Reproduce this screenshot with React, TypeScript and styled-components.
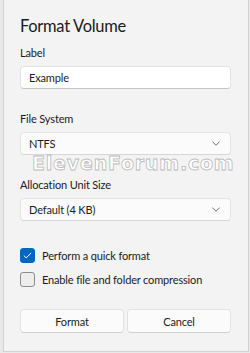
import React from 'react';
import styled, { createGlobalStyle } from 'styled-components';

const GlobalStyle = createGlobalStyle`
  html, body {
    margin: 0;
    padding: 0;
    background: #e9e9e9;
  }
  body {
    font-family: Lato, "Open Sans", sans-serif;
    color: #1b1b1b;
  }
`;

const Page = styled.div`
  width: 250px;
  height: 353px;
  padding-left: 3px;
  box-sizing: border-box;
`;

const Dialog = styled.div`
  position: relative;
  width: 246px;
  height: 352px;
  box-sizing: border-box;
  background: #f3f3f3;
  border: 1px solid #d2d2d2;
  border-top: none;
  padding: 14px 17px 0 16px;
  display: flex;
  flex-direction: column;
  font-size: 11px;
  letter-spacing: -0.15px;
`;

const Title = styled.h1`
  margin: 0 0 7px;
  font-size: 16.5px;
  line-height: 24px;
  font-weight: 400;
  letter-spacing: -0.3px;
`;

const FieldLabel = styled.div`
  line-height: 16px;
  margin-bottom: 5px;
`;

const Box = styled.div<{ $select?: boolean }>`
  height: 23px;
  box-sizing: border-box;
  background: ${p => (p.$select ? '#fbfbfb' : '#ffffff')};
  border: 1px solid #e3e3e3;
  border-bottom-color: ${p => (p.$select ? '#d6d6d6' : '#c4c4c4')};
  border-radius: 4px;
  display: flex;
  align-items: center;
  justify-content: space-between;
  padding: 0 10px 0 8px;
  margin-bottom: 22px;
`;

const Chevron = () => (
  <svg width="8" height="5" viewBox="0 0 8 5" fill="none">
    <path d="M0.5 0.8 L4 4.2 L7.5 0.8" stroke="#5f5f5f" strokeWidth="0.9" />
  </svg>
);

const Checks = styled.div`
  margin-top: 5px;
  display: flex;
  flex-direction: column;
  gap: 9px;
`;

const CheckRow = styled.label`
  display: flex;
  align-items: center;
  gap: 7px;
  line-height: 15px;
`;

const CheckBox = styled.span<{ $on?: boolean }>`
  width: 15px;
  height: 15px;
  box-sizing: border-box;
  border-radius: 3px;
  display: flex;
  align-items: center;
  justify-content: center;
  background: ${p => (p.$on ? '#0067c0' : '#ededed')};
  border: 1px solid ${p => (p.$on ? '#0067c0' : '#8d8d8d')};
`;

const Buttons = styled.div`
  margin-top: 22px;
  display: grid;
  grid-template-columns: 1fr 1fr;
  gap: 3px;
`;

const Button = styled.button`
  height: 24px;
  background: #fbfbfb;
  border: 1px solid #e3e3e3;
  border-bottom-color: #d0d0d0;
  border-radius: 4px;
  font-family: inherit;
  font-size: inherit;
  letter-spacing: inherit;
  color: #1b1b1b;
  padding: 0;
`;

const Watermark = styled.div`
  position: absolute;
  left: 28px;
  top: 152px;
  font-family: "DejaVu Sans", sans-serif;
  font-size: 19px;
  font-weight: 700;
  letter-spacing: 0.8px;
  color: #ffffff;
  -webkit-text-stroke: 0.8px #b9b9b9;
  pointer-events: none;
`;

export default function App() {
  return (
    <Page>
      <GlobalStyle />
      <Dialog>
        <Title>Format Volume</Title>
        <FieldLabel>Label</FieldLabel>
        <Box>Example</Box>
        <FieldLabel>File System</FieldLabel>
        <Box $select>
          NTFS
          <Chevron />
        </Box>
        <FieldLabel>Allocation Unit Size</FieldLabel>
        <Box $select>
          Default (4 KB)
          <Chevron />
        </Box>
        <Checks>
          <CheckRow>
            <CheckBox $on>
              <svg width="9" height="7" viewBox="0 0 9 7" fill="none">
                <path d="M0.8 3.6 L3.2 5.9 L8.2 0.9" stroke="#ffffff" strokeWidth="1" />
              </svg>
            </CheckBox>
            Perform a quick format
          </CheckRow>
          <CheckRow>
            <CheckBox />
            Enable file and folder compression
          </CheckRow>
        </Checks>
        <Buttons>
          <Button>Format</Button>
          <Button>Cancel</Button>
        </Buttons>
        <Watermark>ElevenForum.com</Watermark>
      </Dialog>
    </Page>
  );
}
